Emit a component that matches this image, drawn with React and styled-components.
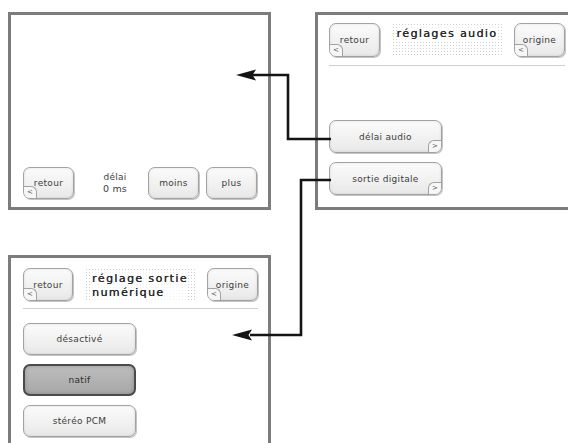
import React from "react";
import styled, { createGlobalStyle, css } from "styled-components";

const GlobalStyle = createGlobalStyle`
  html, body { margin: 0; padding: 0; background: #ffffff; overflow: hidden; }
  body { font-family: "DejaVu Sans", "Liberation Sans", sans-serif; color: #333; }
`;

const Canvas = styled.div`
  position: relative;
  width: 568px;
  height: 443px;
  overflow: hidden;
  background: #fff;
`;

const Screen = styled.section`
  position: absolute;
  left: ${(p) => p.$x}px;
  top: ${(p) => p.$y}px;
  width: ${(p) => p.$w}px;
  height: ${(p) => p.$h}px;
  box-sizing: border-box;
  border: 3px solid #7c7c7c;
  background: #fff;
  padding: ${(p) => p.$pad};
  display: flex;
  flex-direction: column;
  justify-content: ${(p) => (p.$bottom ? "flex-end" : "flex-start")};
`;

const Header = styled.div`
  display: flex;
  align-items: stretch;
  justify-content: space-between;
`;

const Title = styled.div`
  flex: 1;
  display: flex;
  justify-content: center;
  align-items: flex-start;
  padding-top: 4px;
  background-image: radial-gradient(circle, #cfcfcf 0.75px, transparent 1px);
  background-size: 3px 3px;
  background-repeat: repeat;
  margin: 0 12px;
`;

const TitleText = styled.div`
  font-size: 11px;
  line-height: 14px;
  letter-spacing: 1.4px;
  font-weight: normal;
  color: #2a2a2a;
  text-shadow: 0.25px 0 0 #2a2a2a;
  text-align: left;
  background: rgba(255, 255, 255, 0.7);
  white-space: nowrap;
`;

const Separator = styled.div`
  height: 1px;
  background: #cfcfcf;
  margin-top: ${(p) => p.$mt}px;
`;

const List = styled.div`
  display: flex;
  flex-direction: column;
  gap: ${(p) => p.$gap}px;
  margin-top: ${(p) => (p.$auto ? "auto" : `${p.$mt}px`)};
`;

const Button = styled.div`
  position: relative;
  box-sizing: border-box;
  flex: none;
  width: ${(p) => p.$w}px;
  height: ${(p) => p.$h}px;
  border-radius: 7px;
  display: flex;
  align-items: center;
  justify-content: center;
  font-size: 9px;
  letter-spacing: 0.3px;
  color: #3c3c3c;
  ${(p) =>
    p.$active
      ? css`
          border: 2px solid #4a4a4a;
          background: linear-gradient(180deg, #bdbdbd 0%, #b0b0b0 60%, #a8a8a8 100%);
          box-shadow: inset 0 0 4px rgba(0, 0, 0, 0.2);
          color: #2e2e2e;
        `
      : css`
          border: 1px solid #a2a2a2;
          background: linear-gradient(180deg, #fbfbfb 0%, #f1f1f1 55%, #e8e8e8 100%);
          box-shadow: 1px 1px 0 #c4c4c4, inset 0 0 3px rgba(0, 0, 0, 0.1);
        `}
`;

const Tab = styled.span`
  position: absolute;
  bottom: 0;
  width: 13px;
  height: 12px;
  box-sizing: border-box;
  border-top: 1px solid #a2a2a2;
  font-size: 7px;
  line-height: 11px;
  color: #555;
  text-align: center;
  background: #f6f6f6;
  ${(p) =>
    p.$side === "left"
      ? css`
          left: 0;
          border-right: 1px solid #a2a2a2;
          border-top-right-radius: 6px;
          border-bottom-left-radius: 6px;
        `
      : css`
          right: 0;
          border-left: 1px solid #a2a2a2;
          border-top-left-radius: 6px;
          border-bottom-right-radius: 6px;
        `}
`;

const BottomBar = styled.div`
  display: flex;
  align-items: center;
  gap: 7px;
`;

const Readout = styled.div`
  flex: 1;
  padding-left: 8px;
  display: flex;
  flex-direction: column;
  align-items: center;
  font-size: 9px;
  line-height: 12px;
  color: #3c3c3c;
  letter-spacing: 0.2px;
`;

const Value = styled.span`
  font-size: 9.5px;
`;

const Overlay = styled.svg`
  position: absolute;
  left: 0;
  top: 0;
  pointer-events: none;
`;

const Small = ({ label, tab, w = 51, h = 33 }) => (
  <Button $w={w} $h={h}>
    {label}
    {tab && <Tab $side="left">&lt;</Tab>}
  </Button>
);

const Wide = ({ label, tab, active, h = 33 }) => (
  <Button $w={113} $h={h} $active={active}>
    {label}
    {tab && <Tab $side="right">&gt;</Tab>}
  </Button>
);

export default function App() {
  return (
    <>
      <GlobalStyle />
      <Canvas>
        <Screen $x={8} $y={12} $w={263} $h={198} $pad="0 11px 8px 12px" $bottom>
          <BottomBar>
            <Small label="retour" tab h={32} />
            <Readout>
              <span>délai</span>
              <Value>0 ms</Value>
            </Readout>
            <Small label="moins" h={32} />
            <Small label="plus" h={32} />
          </BottomBar>
        </Screen>

        <Screen $x={315} $y={12} $w={265} $h={198} $pad="8px 12px 12px 11px">
          <Header>
            <Small label="retour" tab h={34} />
            <Title>
              <TitleText>réglages audio</TitleText>
            </Title>
            <Small label="origine" tab h={34} />
          </Header>
          <Separator $mt={8} />
          <List $auto $gap={9}>
            <Wide label="délai audio" tab />
            <Wide label="sortie digitale" tab />
          </List>
        </Screen>

        <Screen $x={8} $y={255} $w={263} $h={210} $pad="10px 10px 0 12px">
          <Header>
            <Small label="retour" tab w={50} h={33} />
            <Title>
              <TitleText>
                réglage sortie
                <br />
                numérique
              </TitleText>
            </Title>
            <Small label="origine" tab h={33} />
          </Header>
          <Separator $mt={7} />
          <List $mt={14} $gap={9}>
            <Wide label="désactivé" h={32} />
            <Wide label="natif" active h={32} />
            <Wide label="stéréo PCM" h={32} />
          </List>
        </Screen>

        <Overlay width="568" height="443" viewBox="0 0 568 443">
          <g fill="none" stroke="#141414" strokeWidth="2.6" strokeLinejoin="miter">
            <polyline points="331,139 288,139 288,75 252,75" />
            <polyline points="331,180 301,180 301,335 250,335" />
          </g>
          <g fill="#141414">
            <polygon points="236,75 256,69.5 252.5,75 256,80.5" />
            <polygon points="232,335 252,329.5 248.5,335 252,340.5" />
          </g>
        </Overlay>
      </Canvas>
    </>
  );
}
